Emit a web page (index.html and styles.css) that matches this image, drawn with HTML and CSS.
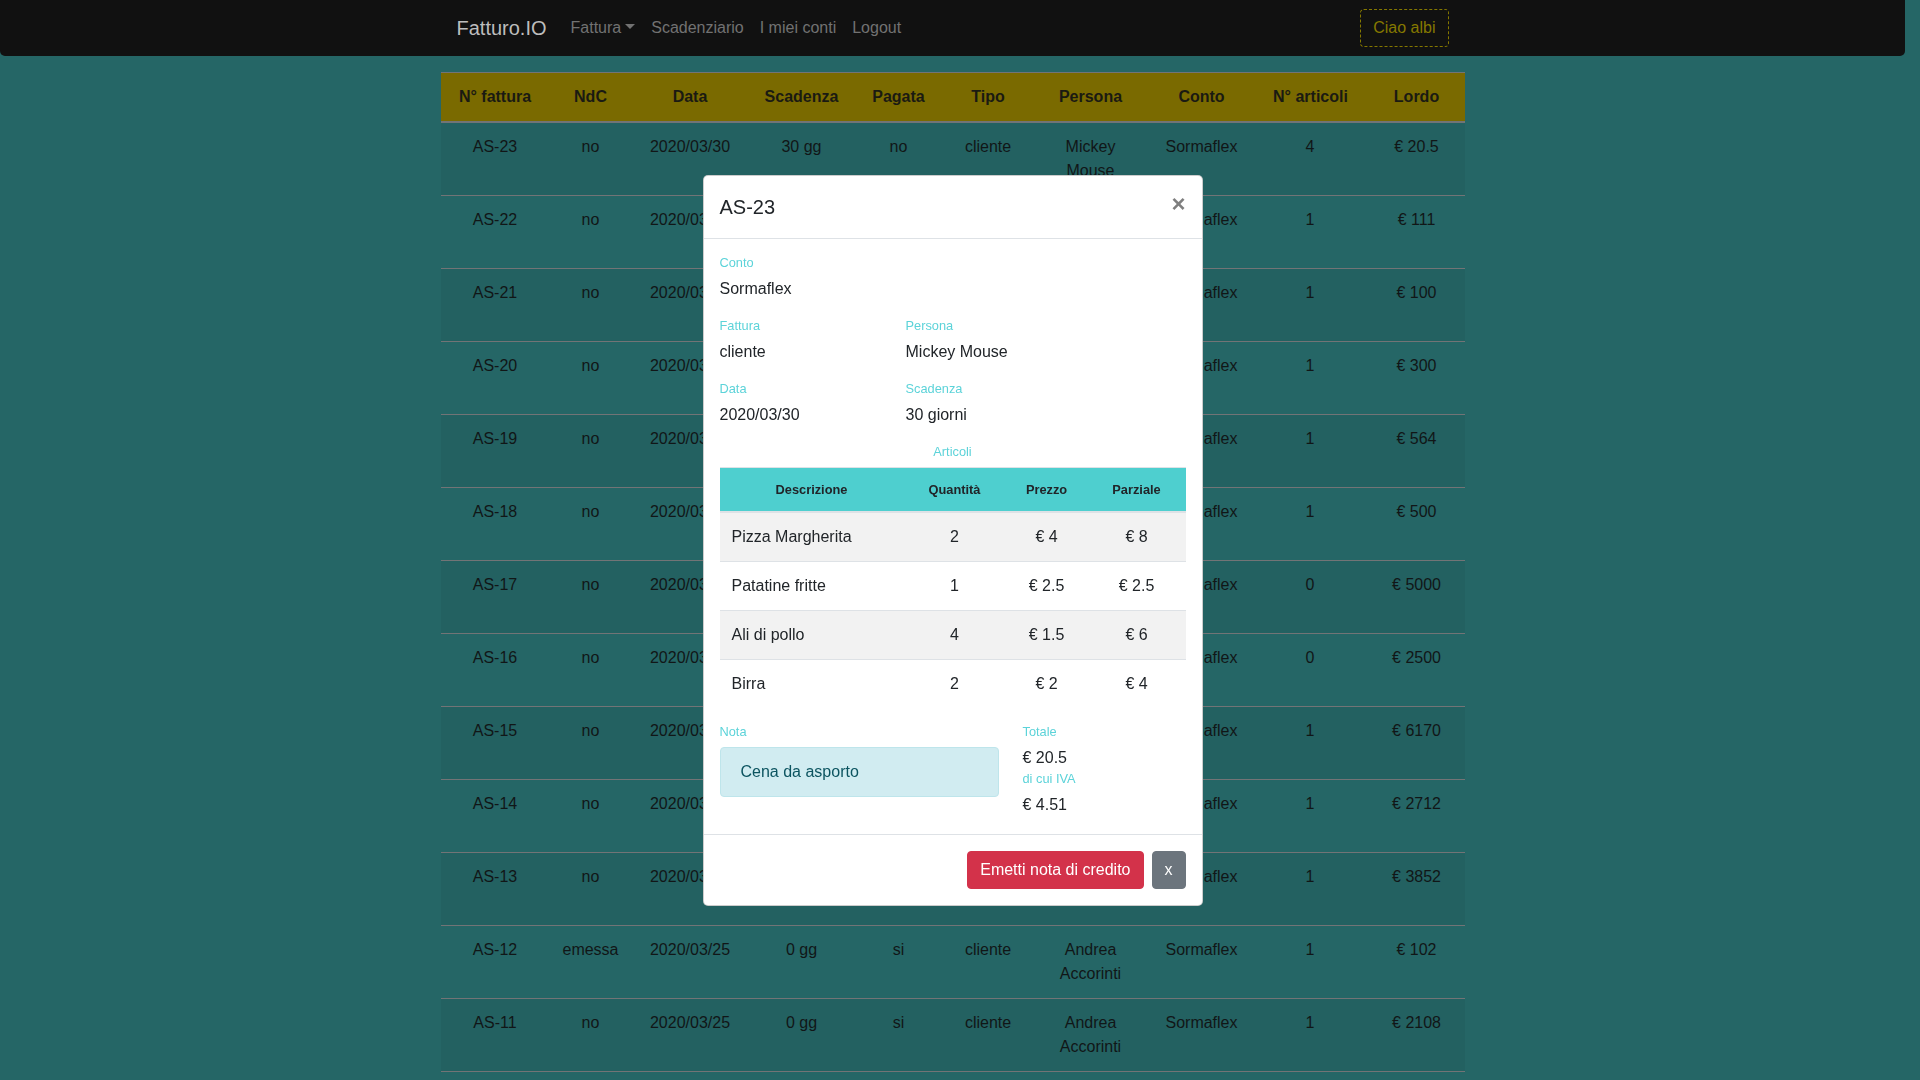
FILE: index.html
```html
<!DOCTYPE html>
<html lang="it">
<head>
<meta charset="utf-8">
<title>Fatturo.IO</title>
<link rel="stylesheet" href="styles.css">
</head>
<body>
<nav class="navbar">
  <div class="nav-inner">
    <a class="brand" href="#">Fatturo.IO</a>
    <ul class="nav-links">
      <li><a class="nav-link" href="#">Fattura<span class="caret"></span></a></li>
      <li><a class="nav-link" href="#">Scadenziario</a></li>
      <li><a class="nav-link" href="#">I miei conti</a></li>
      <li><a class="nav-link" href="#">Logout</a></li>
    </ul>
    <button class="btn-hello" type="button">Ciao albi</button>
  </div>
</nav>

<main class="container">
  <table class="invoices">
    <colgroup>
      <col class="c1"><col class="c2"><col class="c3"><col class="c4"><col class="c5">
      <col class="c6"><col class="c7"><col class="c8"><col class="c9"><col class="c10">
    </colgroup>
    <thead>
      <tr><th>N° fattura</th><th>NdC</th><th>Data</th><th>Scadenza</th><th>Pagata</th><th>Tipo</th><th>Persona</th><th>Conto</th><th>N° articoli</th><th>Lordo</th></tr>
    </thead>
    <tbody>
      <tr><td>AS-23</td><td>no</td><td>2020/03/30</td><td>30 gg</td><td>no</td><td>cliente</td><td>Mickey Mouse</td><td>Sormaflex</td><td>4</td><td>€ 20.5</td></tr>
      <tr><td>AS-22</td><td>no</td><td>2020/03/29</td><td>0 gg</td><td>si</td><td>cliente</td><td>Andrea Accorinti</td><td>Sormaflex</td><td>1</td><td>€ 111</td></tr>
      <tr><td>AS-21</td><td>no</td><td>2020/03/29</td><td>0 gg</td><td>si</td><td>cliente</td><td>Andrea Accorinti</td><td>Sormaflex</td><td>1</td><td>€ 100</td></tr>
      <tr><td>AS-20</td><td>no</td><td>2020/03/28</td><td>0 gg</td><td>si</td><td>cliente</td><td>Andrea Accorinti</td><td>Sormaflex</td><td>1</td><td>€ 300</td></tr>
      <tr><td>AS-19</td><td>no</td><td>2020/03/28</td><td>0 gg</td><td>si</td><td>cliente</td><td>Andrea Accorinti</td><td>Sormaflex</td><td>1</td><td>€ 564</td></tr>
      <tr><td>AS-18</td><td>no</td><td>2020/03/27</td><td>0 gg</td><td>si</td><td>cliente</td><td>Andrea Accorinti</td><td>Sormaflex</td><td>1</td><td>€ 500</td></tr>
      <tr><td>AS-17</td><td>no</td><td>2020/03/27</td><td>0 gg</td><td>si</td><td>cliente</td><td>Andrea Accorinti</td><td>Sormaflex</td><td>0</td><td>€ 5000</td></tr>
      <tr><td>AS-16</td><td>no</td><td>2020/03/26</td><td>0 gg</td><td>si</td><td>cliente</td><td>Andrea Accorinti</td><td>Sormaflex</td><td>0</td><td>€ 2500</td></tr>
      <tr><td>AS-15</td><td>no</td><td>2020/03/26</td><td>0 gg</td><td>si</td><td>cliente</td><td>Andrea Accorinti</td><td>Sormaflex</td><td>1</td><td>€ 6170</td></tr>
      <tr><td>AS-14</td><td>no</td><td>2020/03/26</td><td>0 gg</td><td>si</td><td>cliente</td><td>Andrea Accorinti</td><td>Sormaflex</td><td>1</td><td>€ 2712</td></tr>
      <tr><td>AS-13</td><td>no</td><td>2020/03/25</td><td>0 gg</td><td>si</td><td>cliente</td><td>Andrea Accorinti</td><td>Sormaflex</td><td>1</td><td>€ 3852</td></tr>
      <tr><td>AS-12</td><td>emessa</td><td>2020/03/25</td><td>0 gg</td><td>si</td><td>cliente</td><td>Andrea Accorinti</td><td>Sormaflex</td><td>1</td><td>€ 102</td></tr>
      <tr><td>AS-11</td><td>no</td><td>2020/03/25</td><td>0 gg</td><td>si</td><td>cliente</td><td>Andrea Accorinti</td><td>Sormaflex</td><td>1</td><td>€ 2108</td></tr>
      <tr><td>AS-10</td><td>no</td><td>2020/03/24</td><td>0 gg</td><td>si</td><td>cliente</td><td>Andrea Accorinti</td><td>Sormaflex</td><td>1</td><td>€ 450</td></tr>
    </tbody>
  </table>
</main>

<div class="modal">
  <div class="modal-dialog">
    <div class="modal-content">
      <div class="modal-header">
        <h5 class="modal-title">AS-23</h5>
        <button class="close" type="button">×</button>
      </div>
      <div class="modal-body">
        <div class="field">
          <div class="label">Conto</div>
          <div class="value">Sormaflex</div>
        </div>
        <div class="field-row">
          <div class="field">
            <div class="label">Fattura</div>
            <div class="value">cliente</div>
          </div>
          <div class="field">
            <div class="label">Persona</div>
            <div class="value">Mickey Mouse</div>
          </div>
        </div>
        <div class="field-row">
          <div class="field">
            <div class="label">Data</div>
            <div class="value">2020/03/30</div>
          </div>
          <div class="field">
            <div class="label">Scadenza</div>
            <div class="value">30 giorni</div>
          </div>
        </div>
        <div class="label label-center">Articoli</div>
        <table class="items">
          <colgroup><col class="i1"><col class="i2"><col class="i3"><col class="i4"></colgroup>
          <thead>
            <tr><th>Descrizione</th><th>Quantità</th><th>Prezzo</th><th>Parziale</th></tr>
          </thead>
          <tbody>
            <tr><td class="desc">Pizza Margherita</td><td>2</td><td>€ 4</td><td>€ 8</td></tr>
            <tr><td class="desc">Patatine fritte</td><td>1</td><td>€ 2.5</td><td>€ 2.5</td></tr>
            <tr><td class="desc">Ali di pollo</td><td>4</td><td>€ 1.5</td><td>€ 6</td></tr>
            <tr><td class="desc">Birra</td><td>2</td><td>€ 2</td><td>€ 4</td></tr>
          </tbody>
        </table>
        <div class="summary">
          <div class="note-col">
            <div class="label">Nota</div>
            <div class="note">Cena da asporto</div>
          </div>
          <div class="total-col">
            <div class="label">Totale</div>
            <div class="value tight">€ 20.5</div>
            <div class="label">di cui IVA</div>
            <div class="value last">€ 4.51</div>
          </div>
        </div>
      </div>
      <div class="modal-footer">
        <button class="btn btn-danger" type="button">Emetti nota di credito</button>
        <button class="btn btn-secondary" type="button">x</button>
      </div>
    </div>
  </div>
</div>
</body>
</html>
```

FILE: styles.css
```css
* { box-sizing: border-box; }

html, body { height: 100%; }

body {
  margin: 0;
  padding-right: 15px;
  overflow: hidden;
  background: #256666;
  font-family: "Liberation Sans", Arial, Helvetica, sans-serif;
  font-size: 16px;
  line-height: 24px;
  color: #212529;
}

/* ---------- navbar ---------- */
.navbar {
  background: #111111;
  height: 56px;
  border-radius: 0 0 5px 5px;
}

.nav-inner {
  width: 1024px;
  margin: 0 auto;
  height: 56px;
  padding: 8px 16px;
  display: flex;
  align-items: center;
}

.brand {
  font-size: 20px;
  line-height: 30px;
  padding: 5px 0;
  margin-right: 16px;
  color: #bdbdbd;
  text-decoration: none;
}

.nav-links {
  list-style: none;
  margin: 0;
  padding: 0;
  display: flex;
}

.nav-link {
  display: block;
  padding: 8px;
  color: #727272;
  text-decoration: none;
}

.caret {
  display: inline-block;
  margin-left: 4px;
  vertical-align: 4px;
  border-top: 5px solid #727272;
  border-left: 5px solid transparent;
  border-right: 5px solid transparent;
}

.btn-hello {
  margin-left: auto;
  font-family: inherit;
  font-size: 16px;
  line-height: 24px;
  padding: 6px 12px;
  background: transparent;
  color: #857800;
  border: 1px dashed #857800;
  border-radius: 4px;
}

/* ---------- main table ---------- */
.container {
  width: 1024px;
  margin: 16px auto 0;
}

.invoices {
  width: 1024px;
  table-layout: fixed;
  border-collapse: collapse;
  text-align: center;
}

.c1 { width: 107px; }
.c2 { width: 84px; }
.c3 { width: 115px; }
.c4 { width: 108px; }
.c5 { width: 86px; }
.c6 { width: 93px; }
.c7 { width: 112px; }
.c8 { width: 110px; }
.c9 { width: 107px; }
.c10 { width: 102px; }

.invoices th {
  background: #7a6a00;
  color: #1a1a12;
  font-weight: bold;
  padding: 12px 3px 12px 5px;
  white-space: nowrap;
  border-top: 1px solid #727476;
  border-bottom: 2px solid #727476;
  vertical-align: bottom;
}

.invoices td {
  padding: 12px 11px 12px 13px;
  border-top: 1px solid #727476;
  color: #111617;
  vertical-align: top;
}

.invoices th:last-child,
.invoices td:last-child { padding-left: 15px; padding-right: 9px; }

.invoices th:nth-child(9) { padding-left: 6px; }

.invoices tbody tr:nth-child(odd) { background: #236161; }

/* ---------- modal ---------- */
.modal {
  position: fixed;
  inset: 0;
  padding-right: 15px;
  display: flex;
  align-items: center;
  justify-content: center;
}

.modal-dialog { width: 500px; }

.modal-content {
  background: #ffffff;
  border: 1px solid rgba(0, 0, 0, 0.2);
  border-radius: 5px;
}

.modal-header {
  display: flex;
  align-items: flex-start;
  padding: 16px;
  border-bottom: 1px solid #dee2e6;
}

.modal-title {
  margin: 0;
  font-size: 20px;
  line-height: 30px;
  font-weight: normal;
  color: #212529;
}

.close {
  margin: -16px -16px -16px auto;
  padding: 16px;
  background: transparent;
  border: 0;
  font-family: inherit;
  font-size: 24px;
  line-height: 24px;
  font-weight: bold;
  color: #000;
  opacity: 0.5;
}

.modal-body {
  padding: 14px 16px 17px;
}

.label {
  font-size: 12.8px;
  line-height: 19px;
  color: #5cd3d9;
}

.value {
  margin-top: 5px;
  margin-bottom: 15px;
}

.value.tight { margin-top: 6px; margin-bottom: 0; line-height: 22px; }
.value.last { margin-top: 5px; margin-bottom: 0; }

.field-row {
  display: grid;
  grid-template-columns: 186px 1fr;
}

.label-center {
  text-align: center;
  margin-bottom: 6px;
}

.items {
  width: 466px;
  table-layout: fixed;
  border-collapse: collapse;
  text-align: center;
  margin-bottom: 14px;
}

.i1 { width: 184px; }
.i2 { width: 102px; }
.i3 { width: 82px; }
.i4 { width: 98px; }

.items th {
  background: #4ecfcf;
  font-size: 12.8px;
  line-height: 19px;
  font-weight: bold;
  padding: 12px 6px;
  border-top: 1px solid #dee2e6;
  border-bottom: 2px solid #dee2e6;
}

.items td {
  padding: 12px;
  border-top: 1px solid #dee2e6;
}

.items td.desc { text-align: left; }

.items tbody tr:nth-child(odd) { background: #f2f2f2; }

.summary {
  display: grid;
  grid-template-columns: 279px 1fr;
  column-gap: 24px;
}

.note {
  margin-top: 6px;
  padding: 12px 20px;
  background: #d1ecf1;
  border: 1px solid #bee5eb;
  border-radius: 4px;
  color: #0c5460;
}

.modal-footer {
  display: flex;
  justify-content: flex-end;
  gap: 8px;
  padding: 16px;
  border-top: 1px solid #dee2e6;
}

.btn {
  font-family: inherit;
  font-size: 16px;
  line-height: 24px;
  padding: 6px 12px;
  border: 1px solid transparent;
  border-radius: 4px;
  color: #ffffff;
}

.btn-danger { background: #d3324a; border-color: #d3324a; }
.btn-secondary { background: #6c757d; border-color: #6c757d; }
```
